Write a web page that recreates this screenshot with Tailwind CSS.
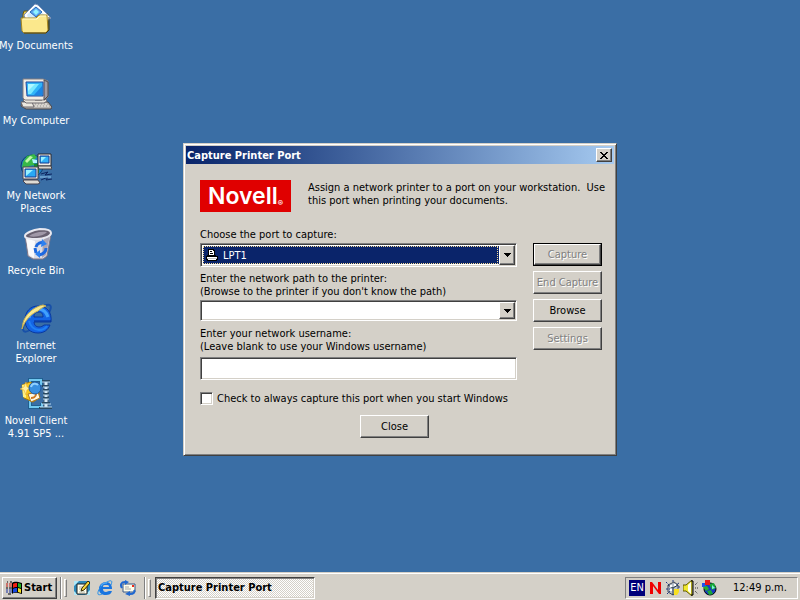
<!DOCTYPE html>
<html lang="en">
<head>
  <meta charset="UTF-8" />
  <meta name="viewport" content="width=device-width, initial-scale=1.0"/>
  <title>Capture Printer Port</title>
  <script src="https://cdn.jsdelivr.net/npm/@tailwindcss/browser@4"></script>
</head>
<body class="flex h-screen flex-col overflow-hidden bg-[#3a6ea5] font-['Tahoma','DejaVu_Sans_Condensed',sans-serif] text-[11px] leading-[13px] text-black">

  <main class="relative flex-1">

    <!-- Desktop shortcuts -->
    <nav class="flex w-18 flex-col text-center text-white">
      <a href="#" class="flex h-[75px] flex-col items-center gap-1 pt-[3px] whitespace-nowrap">
        <svg class="size-8 shrink-0" viewBox="0 0 32 32">
          <path d="M3 11l1-3h7l1 3h16v15l-2 3H4l-1-2z" fill="#e0c450" stroke="#6b5a10"/>
          <path d="M4 12L15 1l3 1 13 13-4 3H6z" fill="#fff" stroke="#7890b8"/>
          <path d="M7 12l8-9 13 12H8z" fill="#d4ecfc"/>
          <path d="M10 9l6-5 6 5-6 5z" fill="#5ca8f0" stroke="#2868b8"/>
          <path d="M13 9l3-3 3 3-3 3z" fill="#90f4ff"/>
          <path d="M1 15h15l3-3h8l1 15-2 3H4l-2-2z" fill="#fbe88c" stroke="#a88820"/>
          <path d="M3 16h14l3-3h6" fill="none" stroke="#fffbd0"/>
          <path d="M4 30h22l3-3V14" fill="none" stroke="#4a3c08"/>
        </svg>
        <span>My Documents</span>
      </a>
      <a href="#" class="flex h-[75px] flex-col items-center gap-1 pt-[3px] whitespace-nowrap">
        <svg class="size-8 shrink-0" viewBox="0 0 32 32">
          <path d="M2 24h26l4 5-1 2H6l-5-3z" fill="#b8b4b0" stroke="#4a4648"/>
          <path d="M7 26h21M9 28h21" stroke="#f8f4ec" stroke-dasharray="2 1"/>
          <path d="M1 24h11l2 5H3z" fill="#ece8e0" stroke="#706c70"/>
          <path d="M5 20h20l2 3-3 2H6l-3-3z" fill="#e8e4dc" stroke="#706c70"/>
          <path d="M15 22h7" stroke="#302c30"/>
          <path d="M3 1h20l5 2v16l-3 3H5l-2-2z" fill="#f0ece4" stroke="#807c80"/>
          <path d="M24 2l4 2v14l-4 4z" fill="#a09ca4" stroke="#504c50"/>
          <path d="M6 4h17v14H7z" fill="#30b4f8" stroke="#2048a0"/>
          <path d="M8 6h11l-8 10H8z" fill="#78e8ff"/>
          <path d="M8 6h7l-7 7z" fill="#b0f8ff"/>
          <path d="M14 17l8-9v9z" fill="#1c84e4"/>
        </svg>
        <span>My Computer</span>
      </a>
      <a href="#" class="flex h-[75px] flex-col items-center gap-1 pt-[3px] whitespace-nowrap">
        <svg class="size-8 shrink-0" viewBox="0 0 32 32">
          <circle cx="12" cy="13" r="11" fill="#1c80c8" stroke="#103c70"/>
          <path d="M3 9l4-6 7-2 3 3-4 4 2 4-6 1-3 5-4-4z" fill="#38b848"/>
          <path d="M5 8l5-5 3 1-6 6z" fill="#c0f8a8"/>
          <path d="M14 11l5-1v10l-5 1z" fill="#188830"/>
          <path d="M12 6l5 1v3h-4z" fill="#b0f4ff"/>
          <path d="M18 1h13v12H18z" fill="#f0ece4" stroke="#282830"/>
          <path d="M20 3h9v7h-9z" fill="#30b0f8" stroke="#103890"/>
          <path d="M21 4h5l-5 5z" fill="#98f0ff"/>
          <path d="M18 13h13l1 3H19z" fill="#d8d4cc" stroke="#404048"/>
          <path d="M3 14h15v12H3z" fill="#f0ece4" stroke="#484450"/>
          <path d="M5 16h11v8H5z" fill="#28a8f4" stroke="#183c90"/>
          <path d="M6 17h7l-7 6z" fill="#98f0ff"/>
          <path d="M4 27h14l2 3-2 1H6l-3-3z" fill="#e0dcd4" stroke="#484450"/>
          <path d="M21 21l7-2-3 3 7-1M21 27l7-3-2 3 6-1" fill="none" stroke="#0c2460"/>
          <path d="M20 24h11" stroke="#90c8f0"/>
        </svg>
        <span>My Network<br>Places</span>
      </a>
      <a href="#" class="flex h-[75px] flex-col items-center gap-1 pt-[3px] whitespace-nowrap">
        <svg class="size-8 shrink-0" viewBox="0 0 32 32">
          <path d="M5 7l3 21 5 3h10l4-3 4-22z" fill="#dcdce4" stroke="#807888"/>
          <path d="M6 10l3 17 5 3 1-17z" fill="#fafafc"/>
          <path d="M23 12l7-5-4 20-4 3z" fill="#a8a4b4"/>
          <path d="M5 8c0-3 8-6 15-7 6 0 11 1 11 4s-7 6-14 6S5 11 5 8z" fill="#686070" stroke="#e8e8f0" stroke-width="2"/>
          <path d="M9 8c4-3 11-5 18-4-2 3-12 6-18 4z" fill="#a098a8"/>
          <path d="M16 19c1-4 5-5 8-4M26 20c0 4-3 6-7 7M16 25l-1-5" fill="none" stroke="#1c68e0" stroke-width="3"/>
          <path d="M22 11l5 5-6 3zM20 22v8l-5-4z" fill="#2c80f0"/>
        </svg>
        <span>Recycle Bin</span>
      </a>
      <a href="#" class="flex h-[75px] flex-col items-center gap-1 pt-[3px] whitespace-nowrap">
        <svg class="size-8 shrink-0" viewBox="0 0 32 32">
          <path d="M28 11c5-8 3-11-4-8" fill="none" stroke="#1850a8" stroke-width="2"/>
          <path d="M5 19c-4 8-2 12 5 8" fill="none" stroke="#1850a8" stroke-width="2"/>
          <path d="M18 3c9 0 14 6 13 16H14c0 3 2 5 5 5 2 0 4-1 5-2h6c-2 5-6 8-12 8C10 30 5 25 5 17S10 3 18 3z" fill="#1464e4" stroke="#0838a0"/>
          <path d="M14 14h9c0-4-2-5-4-5-3 0-5 1-5 5z" fill="#3a6ea5" stroke="#0838a0"/>
          <path d="M9 15c1-6 5-9 9-9s8 2 10 8" fill="none" stroke="#40a0fc" stroke-width="3"/>
          <path d="M9 18c1 5 5 9 10 9 4 0 6-1 8-4" fill="none" stroke="#2080f4" stroke-width="2"/>
          <path d="M14 18h17" stroke="#082c88"/>
          <path d="M23 2C13 4 5 12 3 20l-1 6c3-9 9-15 16-18 2-2 5-4 8-5z" fill="#f8e890" stroke="#c8b050"/>
        </svg>
        <span>Internet<br>Explorer</span>
      </a>
      <a href="#" class="flex h-[75px] flex-col items-center gap-1 pt-[3px] whitespace-nowrap">
        <svg class="size-8 shrink-0" viewBox="0 0 32 32">
          <path d="M10 7V2h11v5M10 23v6h12v-4" fill="none" stroke="#206090" stroke-width="4"/>
          <path d="M10 7V2h11v5M10 23v6h12v-4" fill="none" stroke="#70c8f0" stroke-width="2"/>
          <path d="M26 2v28" stroke="#405870" stroke-width="5"/>
          <path d="M26 2v28" stroke="#d8ecf8" stroke-width="3"/>
          <path d="M22 3h8M22 8h7M23 12h6M23 16h6M23 20h6M22 25h8M19 30h13" stroke="#284860" stroke-width="2"/>
          <path d="M22 4h8M23 9h6M23 13h6M23 17h6M23 21h6M22 26h9M20 29h12" stroke="#b8d8f0"/>
          <path d="M2 7l8-3 9 3v13l-6 4-9-4z" fill="#f8c820" stroke="#a87808"/>
          <path d="M2 7l4-1v14l-3-1z" fill="#fff080"/>
          <path d="M6 4l1 5 4 1-4 2-1 5-2-5-4-1 4-2z" fill="#fff0a0" stroke="#e8a818" stroke-width=".5"/>
          <path d="M8 16l10-2 2 6-9 4z" fill="#fff8e0" stroke="#b07820"/>
          <path d="M11 20c2 0 5-1 5-4" fill="none" stroke="#d07820" stroke-width="2"/>
          <circle cx="15" cy="10" r="6" fill="#3890e0" stroke="#1c58a0"/>
          <path d="M11 9c1-4 5-4 7-2" fill="none" stroke="#90d0ff" stroke-width="2"/>
        </svg>
        <span>Novell Client<br>4.91 SP5 ...</span>
      </a>
    </nav>

    <!-- Dialog window -->
    <section class="absolute top-[143px] left-[183px] w-[434px] border border-t-[#d4d0c8] border-r-[#404040] border-b-[#404040] border-l-[#d4d0c8] bg-[#d4d0c8] p-0.5 shadow-[inset_1px_1px_#fff,inset_-1px_-1px_#808080]">
      <header class="flex h-[18px] items-center justify-between bg-linear-to-r from-[#0a246a] to-[#a6caf0] pr-0.5 pl-px">
        <h1 class="font-bold whitespace-nowrap text-white">Capture Printer Port</h1>
        <button aria-label="Close window" class="flex h-3.5 w-4 items-center justify-center border border-t-white border-r-[#404040] border-b-[#404040] border-l-white bg-[#d4d0c8] shadow-[inset_-1px_-1px_#808080]">
          <svg class="h-[7px] w-2" viewBox="0 0 8 7" shape-rendering="crispEdges">
            <path d="M0 0h2v1h1v1h2V1h1V0h2v1H7v1H6v1H5v1h1v1h1v1h1v1H6V6H5V5H3v1H2v1H0V6h1V5h1V4h1V3H2V2H1V1H0z"/>
          </svg>
        </button>
      </header>

      <form class="pt-4 pr-3 pb-[15px] pl-3.5">
        <div class="flex gap-[17px]">
          <div class="flex h-8 w-[91px] shrink-0 items-center justify-center bg-[#e00000] font-['Inter'] text-[23px] font-semibold text-white">Novell<span class="self-end pb-0.5 text-[8px]">®</span></div>
          <p class="pt-px whitespace-nowrap">Assign a network printer to a port on your workstation.&nbsp; Use<br>this port when printing your documents.</p>
        </div>

        <div class="mt-4 flex gap-4">
          <div class="min-w-0 flex-1 whitespace-nowrap">
            <label for="port" class="block">Choose the port to capture:</label>
            <div class="relative mt-0.5 h-6 border border-t-[#808080] border-r-white border-b-white border-l-[#808080] bg-white p-px shadow-[inset_1px_1px_#404040,inset_-1px_-1px_#d4d0c8]">
              <select id="port" class="h-full w-full appearance-none border border-white bg-[#0a246a] pl-5 text-white">
                <option>LPT1</option>
              </select>
              <span class="pointer-events-none absolute inset-y-0.5 right-[18px] left-0.5 border border-dotted border-[#f5db95]"></span>
              <svg class="pointer-events-none absolute top-[5px] left-[5px] size-3" viewBox="0 0 12 12" shape-rendering="crispEdges">
                <path d="M2 0h6v1h1v5h1v1h2v4h-1v1H1v-1H0V7h1V6h1z" fill="#000"/>
                <path d="M3 1h4v1h1v4H3zM1 8h10v1H1zM2 10h8v1H2z" fill="#fff"/>
                <path d="M4 2h2v1H4zM4 4h3v1H4z" fill="#000"/>
                <path d="M1 9h10v1H1z" fill="#c0c0c0"/>
              </svg>
              <span class="pointer-events-none absolute inset-y-px right-px flex w-4 items-center justify-center border border-t-white border-r-[#404040] border-b-[#404040] border-l-white bg-[#d4d0c8] shadow-[inset_-1px_-1px_#808080]">
                <svg class="h-1 w-[7px]" viewBox="0 0 7 4" shape-rendering="crispEdges"><path d="M0 0h7v1H6v1H5v1H4v1H3V3H2V2H1V1H0z"/></svg>
              </span>
            </div>

            <label for="path" class="mt-[5px] block">Enter the network path to the printer:<br>(Browse to the printer if you don't know the path)</label>
            <div class="relative mt-0.5 h-[21px] border border-t-[#808080] border-r-white border-b-white border-l-[#808080] bg-white p-px shadow-[inset_1px_1px_#404040,inset_-1px_-1px_#d4d0c8]">
              <select id="path" class="h-full w-full appearance-none bg-white pl-1 outline-none">
                <option></option>
              </select>
              <span class="pointer-events-none absolute inset-y-px right-px flex w-4 items-center justify-center border border-t-white border-r-[#404040] border-b-[#404040] border-l-white bg-[#d4d0c8] shadow-[inset_-1px_-1px_#808080]">
                <svg class="h-1 w-[7px]" viewBox="0 0 7 4" shape-rendering="crispEdges"><path d="M0 0h7v1H6v1H5v1H4v1H3V3H2V2H1V1H0z"/></svg>
              </span>
            </div>

            <label for="username" class="mt-1.5 block">Enter your network username:<br>(Leave blank to use your Windows username)</label>
            <input id="username" type="text" class="mt-1 block h-[23px] w-full border border-t-[#808080] border-r-white border-b-white border-l-[#808080] bg-white px-1 shadow-[inset_1px_1px_#404040,inset_-1px_-1px_#d4d0c8] outline-none" />
          </div>

          <div class="flex w-[69px] shrink-0 flex-col gap-[5px] pt-[15px] whitespace-nowrap">
            <div class="h-[23px] border border-black">
              <button type="button" disabled class="h-full w-full border border-t-white border-r-[#404040] border-b-[#404040] border-l-white text-[#808080] shadow-[inset_-1px_-1px_#808080] text-shadow-[1px_1px_0_#fff]">Capture</button>
            </div>
            <button type="button" disabled class="h-[23px] border border-t-white border-r-[#404040] border-b-[#404040] border-l-white text-[#808080] shadow-[inset_-1px_-1px_#808080] text-shadow-[1px_1px_0_#fff]">End Capture</button>
            <button type="button" class="h-[23px] border border-t-white border-r-[#404040] border-b-[#404040] border-l-white shadow-[inset_-1px_-1px_#808080]">Browse</button>
            <button type="button" disabled class="h-[23px] border border-t-white border-r-[#404040] border-b-[#404040] border-l-white text-[#808080] shadow-[inset_-1px_-1px_#808080] text-shadow-[1px_1px_0_#fff]">Settings</button>
          </div>
        </div>

        <div class="mt-3 flex items-center gap-1">
          <input id="always" type="checkbox" class="size-[13px] appearance-none border border-t-[#808080] border-r-white border-b-white border-l-[#808080] bg-white shadow-[inset_1px_1px_#404040,inset_-1px_-1px_#d4d0c8]" />
          <label for="always" class="whitespace-nowrap">Check to always capture this port when you start Windows</label>
        </div>

        <button type="button" class="mt-2.5 ml-40 block h-[23px] w-[69px] border border-t-white border-r-[#404040] border-b-[#404040] border-l-white shadow-[inset_-1px_-1px_#808080]">Close</button>
      </form>
    </section>
  </main>

  <!-- Taskbar -->
  <footer class="flex h-7 items-center border-t border-[#d4d0c8] bg-[#d4d0c8] px-0.5 pt-0.5 whitespace-nowrap shadow-[inset_0_1px_#fff]">
    <button class="flex h-[22px] w-[55px] items-center gap-0.5 border border-t-white border-r-[#404040] border-b-[#404040] border-l-white pl-[3px] font-bold shadow-[inset_-1px_-1px_#808080]">
      <svg class="h-3.5 w-4 shrink-0" viewBox="0 0 16 14">
        <path d="M6 2c3-2 5-1 10 0v11c-5-1-7-2-10 0z" fill="#000"/>
        <path d="M7 3c1-1 2-1 4-1v4c-2 0-3 0-4 1z" fill="#f02010"/>
        <path d="M12 2l3 1v4l-3-1z" fill="#20b020"/>
        <path d="M7 8c1-1 2-1 4-1v4c-2 0-3 0-4 1z" fill="#1848e0"/>
        <path d="M12 7l3 1v4l-3-1z" fill="#f8e020"/>
        <path d="M0 3h2M3 3h3M0 5h2M3 5h3" stroke="#c01810"/>
        <path d="M0 9h2M3 9h3M0 11h2M3 11h3" stroke="#1830a0"/>
        <path d="M1 1h1M4 1h2M0 7h2M3 7h3M2 13h3" stroke="#000"/>
      </svg>
      Start
    </button>
    <span class="ml-[3px] h-[22px] w-0.5 border-r border-l border-l-[#808080] border-r-white"></span>
    <span class="ml-0.5 h-[18px] w-[3px] border border-t-white border-r-[#808080] border-b-[#808080] border-l-white"></span>
    <div class="ml-[7px] flex gap-[7px]">
      <a href="#" aria-label="Show Desktop">
        <svg class="size-4" viewBox="0 0 16 16">
          <path d="M0 1h16v14H0z" fill="#2c88b8"/>
          <path d="M0 1h5L0 6zM11 15h5v-5zM0 11v4h4z" fill="#b0e8f8"/>
          <path d="M3 4h10v10H3z" fill="#fffff0" stroke="#202020"/>
          <path d="M5 7h5M5 9h3M5 12h6" stroke="#b0b0a0"/>
          <path d="M14 1l-6 7-1 3 3-1 6-7z" fill="#f8d838" stroke="#302808"/>
        </svg>
      </a>
      <a href="#" aria-label="Internet Explorer">
        <svg class="size-4" viewBox="0 0 16 16">
          <path d="M9 2c4 0 6 3 6 7H6c0 2 1 3 3 3l3-1h3c-1 3-3 4-6 4-4 0-7-2-7-6s3-7 7-7z" fill="#1874e0"/>
          <path d="M6 7h6c0-2-1-2-3-2S6 5 6 7z" fill="#d4d0c8"/>
          <path d="M14 5c2-5 0-5-4-3C5 4 0 11 1 14c0 1 2 1 4 0" fill="none" stroke="#2890e8"/>
          <path d="M4 6c1-3 4-3 6-3" fill="none" stroke="#68c0ff"/>
        </svg>
      </a>
      <a href="#" aria-label="Outlook Express">
        <svg class="size-4" viewBox="0 0 16 16">
          <path d="M3 4h12v8H3z" fill="#fffce8" stroke="#385888"/>
          <path d="M5 7h4M5 9h6" stroke="#a8a8a8"/>
          <path d="M12 5h2v2h-2z" fill="#f02818"/>
          <path d="M2 8C0 5 1 2 5 2M14 10c1 2 0 4-4 4" fill="none" stroke="#2068d0" stroke-width="2"/>
          <path d="M5 0l4 2-4 3zM10 11v5l-5-2z" fill="#2068d0"/>
        </svg>
      </a>
    </div>
    <span class="ml-2 h-[22px] w-0.5 border-r border-l border-l-[#808080] border-r-white"></span>
    <span class="ml-0.5 h-[18px] w-[3px] border border-t-white border-r-[#808080] border-b-[#808080] border-l-white"></span>
    <button class="ml-1 h-[22px] w-40 border border-t-[#404040] border-r-white border-b-white border-l-[#404040] bg-[repeating-conic-gradient(#fff_0_25%,#d4d0c8_0_50%)] bg-[length:2px_2px] pl-0.5 text-left font-bold shadow-[inset_1px_1px_#808080,inset_-1px_-1px_#d4d0c8]">Capture Printer Port</button>

    <div class="ml-auto flex h-[22px] w-[173px] items-center gap-0.5 border border-t-[#808080] border-r-white border-b-white border-l-[#808080] pl-[3px]">
      <span class="flex size-4 items-center justify-center bg-[#00007b] text-white">EN</span>
      <svg class="size-4" viewBox="0 0 16 16"><path d="M3 14V2h2l6 8V2h3v12h-2L6 6v8z" fill="#f00000"/></svg>
      <svg class="size-4" viewBox="0 0 16 16">
        <path d="M3 5l6-3 4 3v7l-5 3-5-3z" fill="#b8c0cc" stroke="#404858"/>
        <path d="M3 5l5 3 5-3M8 8v7" fill="none" stroke="#283848"/>
        <path d="M1 2l3 3M8 0v3M14 3l-3 2M1 9h4M2 14l3-3M13 7h3" stroke="#203880" stroke-dasharray="2 1"/>
        <path d="M5 5h2v2H5zM9 4h2v2H9zM5 9h2v2H5z" fill="#fff"/>
        <path d="M9 9h5v3l-2 3H9z" fill="#f8e020"/>
      </svg>
      <svg class="size-4" viewBox="0 0 16 16">
        <path d="M0 5h3l6-5v16l-6-5H0z" fill="#f0e830" stroke="#605800"/>
        <path d="M5 5l3-3v12l-3-3z" fill="#fffff0"/>
        <path d="M8 1h2v14H8" fill="none" stroke="#000"/>
        <path d="M12 5l3-3M12 8h4M12 11l3 3" stroke="#303030" stroke-dasharray="1 1"/>
      </svg>
      <svg class="size-4" viewBox="0 0 16 16">
        <circle cx="9" cy="9" r="6" fill="#1838c0" stroke="#000"/>
        <path d="M8 4l5-1 2 5-4 2zM6 11l4-1 2 4-4 1z" fill="#18a838"/>
        <path d="M11 5l3 3-3 1z" fill="#80f0e0"/>
        <path d="M1 3h4v4H1z" fill="#2050f0"/>
        <path d="M4 0h5v5H4z" fill="#e81818"/>
        <path d="M2 7l4-1 2 3-3 2z" fill="#28b028"/>
      </svg>
      <time class="ml-3.5">12:49 p.m.</time>
    </div>
  </footer>

</body>
</html>
